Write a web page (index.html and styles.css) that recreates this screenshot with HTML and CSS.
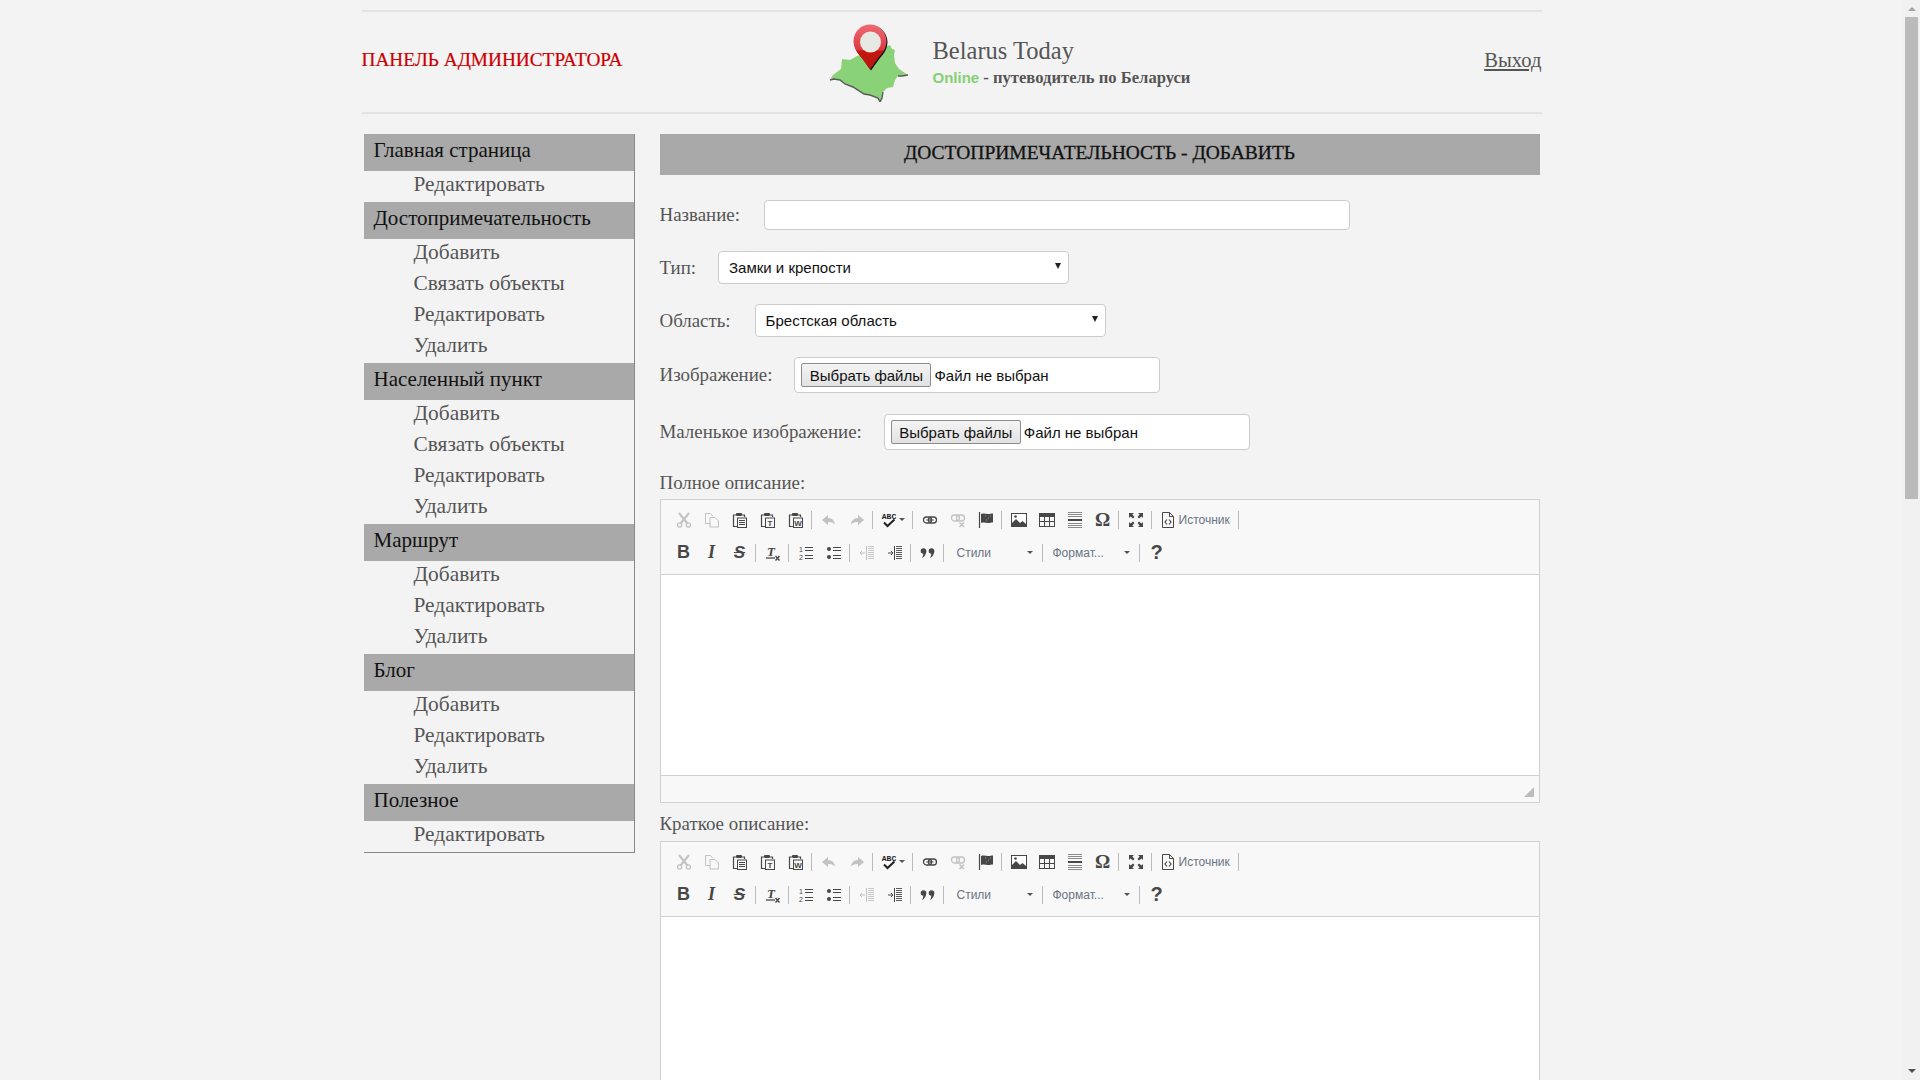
FILE: index.html
```html
<!DOCTYPE html>
<html lang="ru">
<head>
    <meta charset="UTF-8">
    <title>Панель администратора - Belarus Today</title>
    <link rel="stylesheet" href="styles.css">
</head>
<body>
    <svg class="icon-defs" width="0" height="0">
        <defs>
            <symbol id="i-cut" viewBox="0 0 16 16"><path d="M3 1l8.500 10.500M13 1L4.500 11.500" fill="none" stroke="#474747" stroke-width="2"/><circle cx="3.600" cy="13" r="2.100" fill="none" stroke="#474747" stroke-width="1.300"/><circle cx="12.400" cy="13" r="2.100" fill="none" stroke="#474747" stroke-width="1.300"/></symbol>
            <symbol id="i-copy" viewBox="0 0 16 16"><path d="M6.500 11.500H1.500V1.500h5l2.500 3M6 5.500h5l3.500 3.500v6H6z" fill="none" stroke="#474747"/></symbol>
            <symbol id="i-paste" viewBox="0 0 16 16"><path d="M4 3H1.500v11.500H5" fill="none" stroke="#474747" stroke-width="1.200"/><path d="M10 3h2.500v2" fill="none" stroke="#474747" stroke-width="1.200"/><rect x="4" y="1" width="6" height="3" rx="1" fill="#474747"/><rect x="5.500" y="6" width="9" height="9.500" fill="none" stroke="#474747"/><path d="M7 8.500h6M7 10.500h6M7 12.500h6" stroke="#474747"/></symbol>
            <symbol id="i-paste-t" viewBox="0 0 16 16"><path d="M4 3H1.500v11.500H5" fill="none" stroke="#474747" stroke-width="1.200"/><path d="M10 3h2.500v2" fill="none" stroke="#474747" stroke-width="1.200"/><rect x="4" y="1" width="6" height="3" rx="1" fill="#474747"/><rect x="5.500" y="6" width="9" height="9.500" fill="none" stroke="#474747"/><text x="10" y="13.500" class="svg-letter">T</text></symbol>
            <symbol id="i-paste-w" viewBox="0 0 16 16"><path d="M4 3H1.500v11.500H5" fill="none" stroke="#474747" stroke-width="1.200"/><path d="M10 3h2.500v2" fill="none" stroke="#474747" stroke-width="1.200"/><rect x="4" y="1" width="6" height="3" rx="1" fill="#474747"/><rect x="5.500" y="6" width="9" height="9.500" fill="none" stroke="#474747"/><text x="10" y="13.500" class="svg-letter">W</text></symbol>
            <symbol id="i-undo" viewBox="0 0 16 16"><path d="M7 3L1 8l6 5v-3c3 0 5 .5 7 2.500C13.500 8.500 11 6.200 7 6z" fill="#474747"/></symbol>
            <symbol id="i-redo" viewBox="0 0 16 16"><path d="M9 3l6 5-6 5v-3c-3 0-5 .5-7 2.500C2.500 8.500 5 6.200 9 6z" fill="#474747"/></symbol>
            <symbol id="i-spell" viewBox="0 0 16 16"><text x="8" y="7" class="svg-abc">ABC</text><path d="M3 10.500l3.500 3.500 7-6.500" fill="none" stroke="#222" stroke-width="2"/></symbol>
            <symbol id="i-link" viewBox="0 0 16 16"><rect x="1.500" y="5" width="8" height="6" rx="3" fill="none" stroke="#474747" stroke-width="1.300"/><rect x="6.500" y="5" width="8" height="6" rx="3" fill="none" stroke="#474747" stroke-width="1.300"/><path d="M4.500 8h7" stroke="#474747" stroke-width="1.200"/></symbol>
            <symbol id="i-unlink" viewBox="0 0 16 16"><rect x="1.500" y="3" width="8" height="6" rx="3" fill="none" stroke="#474747" stroke-width="1.300"/><rect x="6.500" y="3" width="8" height="6" rx="3" fill="none" stroke="#474747" stroke-width="1.300"/><path d="M9.500 10.500l4.500 4.500M14 10.500L9.500 15" stroke="#474747" stroke-width="1.500"/></symbol>
            <symbol id="i-anchor" viewBox="0 0 16 16"><path d="M1.500 0v16" stroke="#474747" stroke-width="1.200"/><path d="M3 2c3-1 5 0 7 0s3-.5 5-.5v9c-2 0-3 .5-5 .5s-4-1-7 0z" fill="#474747"/><path d="M7 4h1M10 6h1M12 4h1M8 8h1" stroke="#999"/></symbol>
            <symbol id="i-image" viewBox="0 0 16 16"><rect x=".5" y="1.500" width="15" height="13" fill="#fff" stroke="#474747"/><path d="M1 14V11l4-4 4 4 2.500-2L15 12v2z" fill="#474747"/><circle cx="4.500" cy="4.500" r="1.300" fill="#474747"/></symbol>
            <symbol id="i-table" viewBox="0 0 16 16"><rect x=".5" y="1.500" width="15" height="13" fill="none" stroke="#474747"/><path d="M0 1h16v4H0z" fill="#474747"/><path d="M5.500 5v9M10.500 5v9M1 9.500h14" stroke="#474747"/></symbol>
            <symbol id="i-hr" viewBox="0 0 16 16"><path d="M1 .5h14M1 2.500h14M1 4.500h14M1 11.500h14M1 13.500h14M1 15.500h14" stroke="#8a8a8a"/><path d="M1 7h14v2H1z" fill="#474747"/></symbol>
            <symbol id="i-max" viewBox="0 0 16 16"><path d="M1 1h5L4.400 2.600 6.500 5 5 6.500 2.600 4.400 1 6zM15 1v5l-1.600-1.600L11 6.500 9.500 5l2.100-2.400L10 1zM1 15v-5l1.600 1.600L5 9.500 6.500 11l-2.100 2.400L6 15zM15 15h-5l1.600-1.600L9.500 11 11 9.500l2.400 2.100L15 10z" fill="#474747"/></symbol>
            <symbol id="i-source" viewBox="0 0 16 16"><path d="M2.500 .5h7l4 4v11h-11z" fill="none" stroke="#474747"/><path d="M9.500 .5v4h4" fill="none" stroke="#474747"/><path d="M7 7.500L5 10l2 2.500M9 7.500l2 2.500-2 2.500" fill="none" stroke="#474747" stroke-width="1.200"/></symbol>
            <symbol id="i-tx" viewBox="0 0 16 16"><text x="6" y="11" class="svg-tx">T</text><path d="M1 13h9" stroke="#474747" stroke-width="1.300"/><path d="M10.500 11l4 4.500M14.500 11l-4 4.500" stroke="#474747" stroke-width="1.400"/></symbol>
            <symbol id="i-ol" viewBox="0 0 16 16"><text x="3" y="7" class="svg-num">1</text><text x="3" y="15" class="svg-num">2</text><path d="M7 2.500h8M7 5.500h8M7 10.500h8M7 13.500h8" stroke="#474747" stroke-width="1.200"/></symbol>
            <symbol id="i-ul" viewBox="0 0 16 16"><circle cx="3" cy="4" r="2" fill="#474747"/><circle cx="3" cy="12" r="2" fill="#474747"/><path d="M7 2.500h8M7 5.500h8M7 10.500h8M7 13.500h8" stroke="#474747" stroke-width="1.200"/></symbol>
            <symbol id="i-outdent" viewBox="0 0 16 16"><path d="M9 1.500h6M9 3.500h6M9 5.500h6M9 7.500h6M9 9.500h6M9 11.500h6M9 13.500h6" stroke="#474747" stroke-width=".9"/><path d="M7.500 1v14" stroke="#474747"/><path d="M6 8H1M3 6L1 8l2 2" fill="none" stroke="#474747"/></symbol>
            <symbol id="i-indent" viewBox="0 0 16 16"><path d="M9 1.500h6M9 3.500h6M9 5.500h6M9 7.500h6M9 9.500h6M9 11.500h6M9 13.500h6" stroke="#474747" stroke-width=".9"/><path d="M7.500 1v14" stroke="#474747"/><path d="M1 8h5M4 6l2 2-2 2" fill="none" stroke="#474747"/></symbol>
            <symbol id="i-quote" viewBox="0 0 16 16"><circle cx="3.500" cy="6" r="2.800" fill="#474747"/><circle cx="11.500" cy="6" r="2.800" fill="#474747"/><path d="M6.300 6c0 3-1.800 6-4.300 7 1-2 1.300-3 1.300-5zM14.300 6c0 3-1.800 6-4.300 7 1-2 1.300-3 1.300-5z" fill="#474747"/></symbol>
        </defs>
    </svg>

    <div class="screen">
        <div class="page">
            <div class="wrap">
                <header class="header">
                    <h1 class="panel-title">ПАНЕЛЬ АДМИНИСТРАТОРА</h1>
                    <div class="brand">
                        <svg class="logo" width="80" height="80" viewBox="0 0 80 80">
                            <defs>
                                <linearGradient id="pinGrad" x1="0" y1="0" x2="0" y2="1">
                                    <stop offset="0" stop-color="#ee6a72"/>
                                    <stop offset=".55" stop-color="#dc3c44"/>
                                    <stop offset=".6" stop-color="#c4170f"/>
                                    <stop offset="1" stop-color="#b81510"/>
                                </linearGradient>
                            </defs>
                            <path d="M1 58l3-5 8-6 1-10 8 1 7-4 17-4 16-7 2 4 3 1-1 5 1 8 4 6 9 6-6 1-4 0-3 4-2 7-6 1-4 4-1 6-2 4-2-4-8-3-6-1-11-7-8-3-5-4-6-1z" fill="#8ad277"/>
                            <path d="M1 58l4-1 6 1 5 4 8 3 11 7 6 1 8 3 2 4 2-4 1-6M69 54l4 0 6-1" fill="none" stroke="#5a5a5a" stroke-width="1.400"/>
                            <path d="M24.500 19c0-9 7.500-16.500 16.500-16.500s16.500 7.500 16.500 16.500c0 8-5 13-9 18l-7.500 10.500-7.500-10.500c-4-5-9-10-9-18z" fill="#111" transform="translate(1 1)"/>
                            <path d="M24.500 19c0-9 7.500-16.500 16.500-16.500s16.500 7.500 16.500 16.500c0 8-5 13-9 18l-7.500 10.500-7.500-10.500c-4-5-9-10-9-18z" fill="url(#pinGrad)"/>
                            <circle cx="41.500" cy="20" r="10.500" fill="#e8e8e2"/>
                        </svg>
                        <div class="brand-text">
                            <div class="brand-name">Belarus Today</div>
                            <div class="brand-sub"><span class="online">Online</span> - путеводитель по Беларуси</div>
                        </div>
                    </div>
                    <a class="logout" href="#">Выход</a>
                </header>

                <div class="content">
                    <nav class="sidebar">
                        <div class="menu-head">Главная страница</div>
                        <a class="menu-item" href="#">Редактировать</a>
                        <div class="menu-head">Достопримечательность</div>
                        <a class="menu-item" href="#">Добавить</a>
                        <a class="menu-item" href="#">Связать объекты</a>
                        <a class="menu-item" href="#">Редактировать</a>
                        <a class="menu-item" href="#">Удалить</a>
                        <div class="menu-head">Населенный пункт</div>
                        <a class="menu-item" href="#">Добавить</a>
                        <a class="menu-item" href="#">Связать объекты</a>
                        <a class="menu-item" href="#">Редактировать</a>
                        <a class="menu-item" href="#">Удалить</a>
                        <div class="menu-head">Маршрут</div>
                        <a class="menu-item" href="#">Добавить</a>
                        <a class="menu-item" href="#">Редактировать</a>
                        <a class="menu-item" href="#">Удалить</a>
                        <div class="menu-head">Блог</div>
                        <a class="menu-item" href="#">Добавить</a>
                        <a class="menu-item" href="#">Редактировать</a>
                        <a class="menu-item" href="#">Удалить</a>
                        <div class="menu-head">Полезное</div>
                        <a class="menu-item" href="#">Редактировать</a>
                    </nav>

                    <main class="main">
                        <h2 class="main-title">ДОСТОПРИМЕЧАТЕЛЬНОСТЬ - ДОБАВИТЬ</h2>
                        <form>
                            <div class="row row-name">
                                <label for="nazvanie">Название:</label>
                                <input type="text" id="nazvanie" class="text-input">
                            </div>
                            <div class="row row-type">
                                <label for="tip">Тип:</label>
                                <select id="tip" class="select-input">
                                    <option>Замки и крепости</option>
                                </select>
                            </div>
                            <div class="row row-region">
                                <label for="oblast">Область:</label>
                                <select id="oblast" class="select-input">
                                    <option>Брестская область</option>
                                </select>
                            </div>
                            <div class="row row-image">
                                <label>Изображение:</label>
                                <div class="file-box"><button type="button" class="file-btn">Выбрать файлы</button><span class="file-name">Файл не выбран</span></div>
                            </div>
                            <div class="row row-small">
                                <label>Маленькое изображение:</label>
                                <div class="file-box"><button type="button" class="file-btn">Выбрать файлы</button><span class="file-name">Файл не выбран</span></div>
                            </div>

                            <div class="editor-label editor-label-first">Полное описание:</div>
                            <div class="editor">
                                <div class="toolbar">
                                    <div class="tb-row">
                                        <span class="tb-btn off"><svg class="ico"><use href="#i-cut"/></svg></span>
                                        <span class="tb-btn off"><svg class="ico"><use href="#i-copy"/></svg></span>
                                        <span class="tb-btn"><svg class="ico"><use href="#i-paste"/></svg></span>
                                        <span class="tb-btn"><svg class="ico"><use href="#i-paste-t"/></svg></span>
                                        <span class="tb-btn"><svg class="ico"><use href="#i-paste-w"/></svg></span>
                                        <span class="tb-sep"></span>
                                        <span class="tb-btn off"><svg class="ico"><use href="#i-undo"/></svg></span>
                                        <span class="tb-btn off"><svg class="ico"><use href="#i-redo"/></svg></span>
                                        <span class="tb-sep"></span>
                                        <span class="tb-btn tb-spell"><svg class="ico"><use href="#i-spell"/></svg><span class="caret"></span></span>
                                        <span class="tb-sep"></span>
                                        <span class="tb-btn"><svg class="ico"><use href="#i-link"/></svg></span>
                                        <span class="tb-btn off"><svg class="ico"><use href="#i-unlink"/></svg></span>
                                        <span class="tb-btn"><svg class="ico"><use href="#i-anchor"/></svg></span>
                                        <span class="tb-sep"></span>
                                        <span class="tb-btn"><svg class="ico"><use href="#i-image"/></svg></span>
                                        <span class="tb-btn"><svg class="ico"><use href="#i-table"/></svg></span>
                                        <span class="tb-btn"><svg class="ico"><use href="#i-hr"/></svg></span>
                                        <span class="tb-btn tb-char tb-omega">Ω</span>
                                        <span class="tb-sep"></span>
                                        <span class="tb-btn"><svg class="ico"><use href="#i-max"/></svg></span>
                                        <span class="tb-sep"></span>
                                        <span class="tb-btn tb-source"><svg class="ico"><use href="#i-source"/></svg><span class="tb-text">Источник</span></span>
                                        <span class="tb-sep"></span>
                                    </div>
                                    <div class="tb-row">
                                        <span class="tb-btn tb-char tb-b">B</span>
                                        <span class="tb-btn tb-char tb-i">I</span>
                                        <span class="tb-btn tb-char tb-s">S</span>
                                        <span class="tb-sep"></span>
                                        <span class="tb-btn"><svg class="ico"><use href="#i-tx"/></svg></span>
                                        <span class="tb-sep"></span>
                                        <span class="tb-btn"><svg class="ico"><use href="#i-ol"/></svg></span>
                                        <span class="tb-btn"><svg class="ico"><use href="#i-ul"/></svg></span>
                                        <span class="tb-sep"></span>
                                        <span class="tb-btn off"><svg class="ico"><use href="#i-outdent"/></svg></span>
                                        <span class="tb-btn"><svg class="ico"><use href="#i-indent"/></svg></span>
                                        <span class="tb-sep"></span>
                                        <span class="tb-btn"><svg class="ico"><use href="#i-quote"/></svg></span>
                                        <span class="tb-sep"></span>
                                        <span class="tb-combo tb-styles"><span class="tb-text">Стили</span><span class="caret"></span></span>
                                        <span class="tb-sep"></span>
                                        <span class="tb-combo tb-format"><span class="tb-text">Формат...</span><span class="caret"></span></span>
                                        <span class="tb-sep"></span>
                                        <span class="tb-btn tb-char tb-help">?</span>
                                    </div>
                                </div>
                                <div class="editor-area"></div>
                                <div class="editor-foot"><svg class="grip" width="11" height="11" viewBox="0 0 11 11"><path d="M10 0v10H0z" fill="#bdbdbd"/></svg></div>
                            </div>

                            <div class="editor-label">Краткое описание:</div>
                            <div class="editor">
                                <div class="toolbar">
                                    <div class="tb-row">
                                        <span class="tb-btn off"><svg class="ico"><use href="#i-cut"/></svg></span>
                                        <span class="tb-btn off"><svg class="ico"><use href="#i-copy"/></svg></span>
                                        <span class="tb-btn"><svg class="ico"><use href="#i-paste"/></svg></span>
                                        <span class="tb-btn"><svg class="ico"><use href="#i-paste-t"/></svg></span>
                                        <span class="tb-btn"><svg class="ico"><use href="#i-paste-w"/></svg></span>
                                        <span class="tb-sep"></span>
                                        <span class="tb-btn off"><svg class="ico"><use href="#i-undo"/></svg></span>
                                        <span class="tb-btn off"><svg class="ico"><use href="#i-redo"/></svg></span>
                                        <span class="tb-sep"></span>
                                        <span class="tb-btn tb-spell"><svg class="ico"><use href="#i-spell"/></svg><span class="caret"></span></span>
                                        <span class="tb-sep"></span>
                                        <span class="tb-btn"><svg class="ico"><use href="#i-link"/></svg></span>
                                        <span class="tb-btn off"><svg class="ico"><use href="#i-unlink"/></svg></span>
                                        <span class="tb-btn"><svg class="ico"><use href="#i-anchor"/></svg></span>
                                        <span class="tb-sep"></span>
                                        <span class="tb-btn"><svg class="ico"><use href="#i-image"/></svg></span>
                                        <span class="tb-btn"><svg class="ico"><use href="#i-table"/></svg></span>
                                        <span class="tb-btn"><svg class="ico"><use href="#i-hr"/></svg></span>
                                        <span class="tb-btn tb-char tb-omega">Ω</span>
                                        <span class="tb-sep"></span>
                                        <span class="tb-btn"><svg class="ico"><use href="#i-max"/></svg></span>
                                        <span class="tb-sep"></span>
                                        <span class="tb-btn tb-source"><svg class="ico"><use href="#i-source"/></svg><span class="tb-text">Источник</span></span>
                                        <span class="tb-sep"></span>
                                    </div>
                                    <div class="tb-row">
                                        <span class="tb-btn tb-char tb-b">B</span>
                                        <span class="tb-btn tb-char tb-i">I</span>
                                        <span class="tb-btn tb-char tb-s">S</span>
                                        <span class="tb-sep"></span>
                                        <span class="tb-btn"><svg class="ico"><use href="#i-tx"/></svg></span>
                                        <span class="tb-sep"></span>
                                        <span class="tb-btn"><svg class="ico"><use href="#i-ol"/></svg></span>
                                        <span class="tb-btn"><svg class="ico"><use href="#i-ul"/></svg></span>
                                        <span class="tb-sep"></span>
                                        <span class="tb-btn off"><svg class="ico"><use href="#i-outdent"/></svg></span>
                                        <span class="tb-btn"><svg class="ico"><use href="#i-indent"/></svg></span>
                                        <span class="tb-sep"></span>
                                        <span class="tb-btn"><svg class="ico"><use href="#i-quote"/></svg></span>
                                        <span class="tb-sep"></span>
                                        <span class="tb-combo tb-styles"><span class="tb-text">Стили</span><span class="caret"></span></span>
                                        <span class="tb-sep"></span>
                                        <span class="tb-combo tb-format"><span class="tb-text">Формат...</span><span class="caret"></span></span>
                                        <span class="tb-sep"></span>
                                        <span class="tb-btn tb-char tb-help">?</span>
                                    </div>
                                </div>
                                <div class="editor-area editor-area-long"></div>
                            </div>
                        </form>
                    </main>
                </div>
            </div>
        </div>

        <div class="scrollbar">
            <span class="scroll-up"></span>
            <div class="scroll-track"><div class="scroll-thumb"></div></div>
            <span class="scroll-down"></span>
        </div>
    </div>
</body>
</html>
```

FILE: styles.css
```css
html, body {
    height: 100%;
    margin: 0;
}
body {
    font-family: "Liberation Serif", serif;
    background-color: #f3f3f3;
    color: #555;
    overflow: hidden;
}
a {
    color: inherit;
    text-decoration: none;
}
.icon-defs {
    position: absolute;
}
.screen {
    display: flex;
    height: 100vh;
}
.page {
    flex: 1;
    overflow: hidden;
}
.wrap {
    width: 1180px;
    margin: 0 auto;
    padding-top: 10px;
}

/* header */
.header {
    display: flex;
    align-items: center;
    height: 100px;
    border-top: 2px solid #e0e4e3;
    border-bottom: 2px solid #e0e4e3;
}
.panel-title {
    flex: 0 0 467px;
    margin: 0 0 4px;
    font-size: 19.3px;
    font-weight: normal;
    color: #cc0000;
    -webkit-text-stroke: .2px #cc0000;
}
.brand {
    display: flex;
    align-items: center;
}
.logo {
    display: block;
}
.brand-text {
    margin-left: 24px;
}
.brand-name {
    padding-top: 2px;
    font-size: 24.5px;
    line-height: 28px;
    color: #555;
}
.brand-sub {
    padding-top: 2px;
    font-size: 16.6px;
    font-weight: bold;
    line-height: 22px;
    color: #555;
}
.online {
    font-family: "Liberation Sans", sans-serif;
    font-size: 15px;
    color: #86cf75;
}
.logout {
    margin-left: auto;
    margin-bottom: 4px;
    font-size: 20.6px;
    text-decoration: underline;
}

/* sidebar */
.content {
    display: flex;
    align-items: flex-start;
    margin-top: 20px;
    padding-left: 2px;
}
.sidebar {
    width: 270px;
    border-right: 1px solid #888;
    border-bottom: 1px solid #888;
}
.menu-head {
    height: 37px;
    padding-left: 10px;
    font-size: 21px;
    line-height: 32px;
    color: #111;
    background-color: #a9a9a9;
}
.menu-item {
    display: block;
    height: 31px;
    padding-left: 50px;
    font-size: 21.4px;
    line-height: 26px;
}

/* form */
.main {
    width: 880px;
    margin-left: 25px;
}
.main-title {
    height: 41px;
    margin: 0;
    font-size: 19.5px;
    font-weight: normal;
    line-height: 37px;
    text-align: center;
    color: #111;
    background-color: #a9a9a9;
    -webkit-text-stroke: .3px #111;
}
.row {
    display: flex;
    align-items: center;
    gap: 22px;
    font-size: 18.9px;
}
.row-name { margin-top: 25px; gap: 24px; }
.row-type { margin-top: 21px; }
.row-region { margin-top: 20px; gap: 24px; }
.row-image { margin-top: 20px; }
.row-small { margin-top: 21px; }
.text-input {
    width: 586px;
    height: 30px;
    box-sizing: border-box;
    background-color: #fff;
    border: 1px solid #ccc;
    border-radius: 4px;
}
.select-input {
    width: 351px;
    height: 33px;
    box-sizing: border-box;
    padding-left: 10px;
    font-family: "Liberation Sans", sans-serif;
    font-size: 15px;
    color: #111;
    appearance: none;
    background-color: #fff;
    background-image: url("data:image/svg+xml,%3Csvg xmlns='http://www.w3.org/2000/svg' width='6' height='6'%3E%3Cpath d='M0 0h6L3 6z' fill='%23222'/%3E%3C/svg%3E");
    background-repeat: no-repeat;
    background-position: right 7px top 11px;
    border: 1px solid #ccc;
    border-radius: 4px;
}
.file-box {
    display: flex;
    align-items: center;
    width: 366px;
    height: 36px;
    box-sizing: border-box;
    padding-left: 6px;
    font-family: "Liberation Sans", sans-serif;
    font-size: 15px;
    color: #111;
    background-color: #fff;
    border: 1px solid #ccc;
    border-radius: 4px;
}
.file-btn {
    width: 130px;
    height: 24px;
    margin-right: 3px;
    padding: 0;
    font-family: inherit;
    font-size: 15px;
    color: #111;
    background: linear-gradient(#f4f4f4, #e2e2e2);
    border: 1px solid #8c8c8c;
    border-radius: 2px;
}

/* editor */
.editor-label {
    height: 24px;
    margin-top: 9px;
    margin-bottom: 5px;
    font-size: 18.9px;
    line-height: 24px;
}
.editor-label-first {
    margin-top: 21px;
    margin-bottom: 4px;
}
.editor {
    border: 1px solid #d1d1d1;
    background-color: #fff;
}
.toolbar {
    height: 69px;
    padding: 3px 0 2px 9px;
    background-color: #f8f8f8;
    border-bottom: 1px solid #d1d1d1;
}
.tb-row {
    display: flex;
    align-items: center;
    height: 33px;
}
.tb-btn {
    display: flex;
    align-items: center;
    justify-content: center;
    flex: 0 0 28px;
    height: 22px;
}
.tb-btn.off {
    opacity: .3;
}
.ico {
    display: block;
    width: 16px;
    height: 16px;
}
.tb-sep {
    flex: 0 0 1px;
    height: 18px;
    margin: 0 3px 0 1px;
    background-color: #bcbcbc;
}
.tb-spell {
    flex-basis: 35px;
}
.tb-source {
    flex: 0 0 auto;
    padding: 0 7px 0 5px;
}
.tb-text {
    font-family: "Liberation Sans", sans-serif;
    font-size: 12px;
    color: #6a7484;
}
.tb-source .tb-text {
    margin-left: 3px;
}
.tb-char {
    font-family: "Liberation Sans", sans-serif;
    font-size: 17px;
    font-weight: bold;
    color: #474747;
}
.tb-b { font-size: 18px; }
.tb-i {
    font-family: "Liberation Serif", serif;
    font-size: 18px;
    font-style: italic;
}
.tb-s {
    font-style: italic;
    text-decoration: line-through;
}
.tb-help { font-size: 20px; }
.tb-omega {
    font-family: "Liberation Serif", serif;
    font-size: 19px;
}
.tb-combo {
    display: flex;
    align-items: center;
    justify-content: space-between;
    box-sizing: border-box;
    height: 22px;
}
.tb-styles {
    flex: 0 0 94px;
    padding: 0 8px 0 10px;
}
.tb-format {
    flex: 0 0 92px;
    padding: 0 8px 0 7px;
}
.caret {
    display: block;
    width: 0;
    height: 0;
    border-left: 3.5px solid transparent;
    border-right: 3.5px solid transparent;
    border-top: 3px solid #555;
}
.tb-spell .caret {
    margin-left: 2px;
}
.editor-area {
    height: 200px;
    background-color: #fff;
}
.editor-area-long {
    height: 400px;
}
.editor-foot {
    display: flex;
    justify-content: flex-end;
    align-items: flex-end;
    height: 27px;
    box-sizing: border-box;
    padding: 0 4px 4px 0;
    background-color: #f8f8f8;
    border-top: 1px solid #d1d1d1;
}
.grip {
    display: block;
}
.svg-letter {
    font-family: "Liberation Sans", sans-serif;
    font-size: 8px;
    font-weight: bold;
    fill: #474747;
    text-anchor: middle;
}
.svg-abc {
    font-family: "Liberation Mono", monospace;
    font-size: 8px;
    font-weight: bold;
    fill: #222;
    text-anchor: middle;
}
.svg-tx {
    font-family: "Liberation Serif", serif;
    font-size: 13px;
    font-weight: bold;
    font-style: italic;
    fill: #474747;
    text-anchor: middle;
}
.svg-num {
    font-family: "Liberation Sans", sans-serif;
    font-size: 7px;
    fill: #474747;
    text-anchor: middle;
}

/* scrollbar */
.scrollbar {
    display: flex;
    flex-direction: column;
    align-items: center;
    flex: 0 0 17px;
    background-color: #f1f1f1;
}
.scroll-up, .scroll-down {
    display: block;
    flex: 0 0 auto;
    width: 0;
    height: 0;
    margin: 7px 0;
    border-left: 4px solid transparent;
    border-right: 4px solid transparent;
}
.scroll-up {
    border-bottom: 4px solid #a3a3a3;
    margin-bottom: 6px;
}
.scroll-down {
    border-top: 4px solid #505050;
    margin-top: 6px;
}
.scroll-track {
    flex: 1;
    width: 13px;
}
.scroll-thumb {
    height: 482px;
    background-color: #bbb;
}
```
